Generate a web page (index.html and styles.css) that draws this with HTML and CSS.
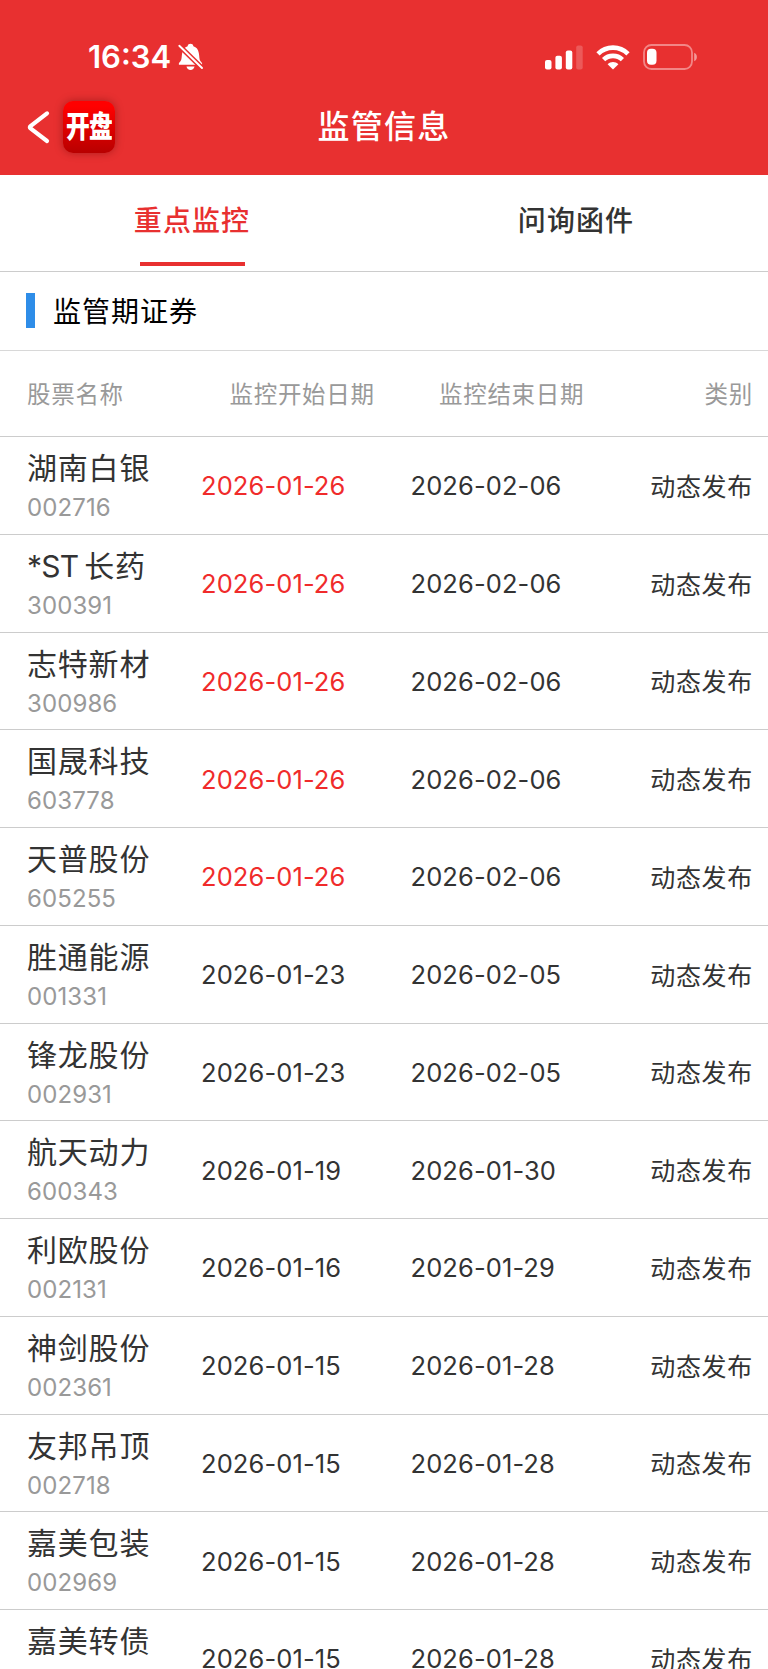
FILE: index.html
```html
<!DOCTYPE html>
<html lang="zh-CN">
  <head>
    <meta charset="UTF-8" />
    <meta name="viewport" content="width=device-width, initial-scale=1.0" />
    <title>监管信息</title>
    <link rel="stylesheet" href="styles.css">
  </head>
  <body>
    <header class="header">
      <div class="status_bar">
        <span class="clock">16:34</span>
        <svg class="bell" width="25" height="28" viewBox="0 0 25 28">
          <path fill="#fff" d="M1 21.7C.4 20.600 1.200 19.700 2.300 18.500C3.900 16.700 3.500 13.500 4.200 10C4.900 6.200 6.600 4.100 9.600 3.200C9.900 1.600 11 .8 12.500 .8S15.100 1.600 15.400 3.200C18.400 4.100 20.200 6.200 20.800 10C21.500 13.500 21.100 16.700 22.700 18.500C23.800 19.700 24.600 20.600 24 21.700Z"/>
          <path fill="#fff" d="M8.500 23.500H16.500C16 25.700 14.600 27 12.500 27S9 25.700 8.500 23.500Z"/>
          <path stroke="#e83030" stroke-width="5" d="M1 2.500L24.500 25.500"/>
          <path stroke="#fff" stroke-width="1.900" stroke-linecap="round" d="M1.300 2.800L24 25"/>
        </svg>
        <div class="status_icons">
          <svg width="38" height="25" viewBox="0 0 38 25" fill="#fff">
            <rect x="0" y="15" width="6.500" height="9.500" rx="2"/>
            <rect x="10.400" y="10.800" width="6.500" height="13.700" rx="2"/>
            <rect x="20.800" y="5.600" width="6.500" height="18.900" rx="2"/>
            <rect x="31.200" y="0.400" width="6.500" height="24.100" rx="2" opacity=".2"/>
          </svg>
          <svg class="wifi" width="34" height="25" viewBox="0 0 34 25" fill="none" stroke="#fff" stroke-width="4.600">
            <path d="M2 8.800C10.300 .5 23.700 .5 32 8.800"/>
            <path d="M7.600 14.700C12.800 9.600 21.200 9.600 26.400 14.700"/>
            <path fill="#fff" stroke="none" d="M17 24.500L11.600 19.200C14.600 16.300 19.400 16.300 22.400 19.200Z"/>
          </svg>
          <svg class="battery" width="55" height="26" viewBox="0 0 55 26">
            <rect x="1" y="1" width="48" height="24" rx="7.500" fill="none" stroke="#fff" stroke-width="1.800" opacity=".42"/>
            <rect x="4" y="4.800" width="9.500" height="16" rx="4" fill="#fff"/>
            <path d="M51.200 8.800C54.800 10.200 54.800 15.800 51.200 17.200Z" fill="#fff" opacity=".5"/>
          </svg>
        </div>
      </div>
      <div class="nav_bar">
        <div class="nav_left">
          <svg width="24" height="34" viewBox="0 0 24 34" fill="none" stroke="#fff" stroke-width="4.200" stroke-linecap="round" stroke-linejoin="round">
            <path d="M20 3.400L3.500 16.200Q2.200 17.300 3.500 18.400L20 31"/>
          </svg>
          <span class="logo"><span class="logo_text">开盘</span></span>
        </div>
        <h1 class="title">监管信息</h1>
      </div>
    </header>

    <nav class="tabs">
      <a class="tab active">重点监控</a>
      <a class="tab">问询函件</a>
    </nav>

    <h2 class="section_title">监管期证券</h2>

    <div class="list">
      <div class="row list_head">
        <span>股票名称</span><span>监控开始日期</span><span>监控结束日期</span><span class="type">类别</span>
      </div>
      <div class="row">
        <div class="stock"><span class="name">湖南白银</span><span class="code">002716</span></div>
        <span class="date red">2026-01-26</span><span class="date">2026-02-06</span><span class="type">动态发布</span>
      </div>
      <div class="row">
        <div class="stock"><span class="name"><span class="st">*ST</span>长药</span><span class="code">300391</span></div>
        <span class="date red">2026-01-26</span><span class="date">2026-02-06</span><span class="type">动态发布</span>
      </div>
      <div class="row">
        <div class="stock"><span class="name">志特新材</span><span class="code">300986</span></div>
        <span class="date red">2026-01-26</span><span class="date">2026-02-06</span><span class="type">动态发布</span>
      </div>
      <div class="row">
        <div class="stock"><span class="name">国晟科技</span><span class="code">603778</span></div>
        <span class="date red">2026-01-26</span><span class="date">2026-02-06</span><span class="type">动态发布</span>
      </div>
      <div class="row">
        <div class="stock"><span class="name">天普股份</span><span class="code">605255</span></div>
        <span class="date red">2026-01-26</span><span class="date">2026-02-06</span><span class="type">动态发布</span>
      </div>
      <div class="row">
        <div class="stock"><span class="name">胜通能源</span><span class="code">001331</span></div>
        <span class="date">2026-01-23</span><span class="date">2026-02-05</span><span class="type">动态发布</span>
      </div>
      <div class="row">
        <div class="stock"><span class="name">锋龙股份</span><span class="code">002931</span></div>
        <span class="date">2026-01-23</span><span class="date">2026-02-05</span><span class="type">动态发布</span>
      </div>
      <div class="row">
        <div class="stock"><span class="name">航天动力</span><span class="code">600343</span></div>
        <span class="date">2026-01-19</span><span class="date">2026-01-30</span><span class="type">动态发布</span>
      </div>
      <div class="row">
        <div class="stock"><span class="name">利欧股份</span><span class="code">002131</span></div>
        <span class="date">2026-01-16</span><span class="date">2026-01-29</span><span class="type">动态发布</span>
      </div>
      <div class="row">
        <div class="stock"><span class="name">神剑股份</span><span class="code">002361</span></div>
        <span class="date">2026-01-15</span><span class="date">2026-01-28</span><span class="type">动态发布</span>
      </div>
      <div class="row">
        <div class="stock"><span class="name">友邦吊顶</span><span class="code">002718</span></div>
        <span class="date">2026-01-15</span><span class="date">2026-01-28</span><span class="type">动态发布</span>
      </div>
      <div class="row">
        <div class="stock"><span class="name">嘉美包装</span><span class="code">002969</span></div>
        <span class="date">2026-01-15</span><span class="date">2026-01-28</span><span class="type">动态发布</span>
      </div>
      <div class="row">
        <div class="stock"><span class="name">嘉美转债</span></div>
        <span class="date">2026-01-15</span><span class="date">2026-01-28</span><span class="type">动态发布</span>
      </div>
    </div>
  </body>
</html>
```

FILE: styles.css
```css
* {
  box-sizing: border-box;
}

body {
  margin: 0;
  height: 1669px;
  overflow: hidden;
  background-color: #ffffff;
  color: #333333;
  font-family: "Inter", "Noto Sans CJK SC", sans-serif;
}

/* header */
.header {
  height: 175px;
  background-color: #e83030;
  color: #ffffff;
}

.status_bar {
  display: flex;
  align-items: center;
  height: 76px;
  padding: 38px 70px 0 88px;
}

.clock {
  width: 83px;
  font-size: 31px;
  font-weight: 600;
  line-height: 38px;
  white-space: nowrap;
}

.bell {
  margin-left: 7px;
}

.status_icons {
  display: flex;
  align-items: center;
  margin-left: auto;
}

.wifi {
  margin-left: 13px;
}

.battery {
  margin-left: 13px;
}

.nav_bar {
  display: grid;
  grid-template-columns: 1fr auto 1fr;
  align-items: center;
  height: 99px;
}

.nav_left {
  display: flex;
  align-items: center;
  padding-left: 27px;
  margin-top: 2px;
}

.logo {
  display: flex;
  align-items: center;
  justify-content: center;
  width: 52px;
  height: 52px;
  margin-left: 12px;
  border-radius: 10px;
  background: linear-gradient(#ff0000 10%, #b80000);
  box-shadow: 0 0 8px rgba(80, 0, 0, 0.4);
}

.logo_text {
  font-size: 27px;
  font-weight: 900;
  line-height: 52px;
  letter-spacing: -1px;
  transform: scale(0.88, 1.1);
}

.title {
  margin: 2px 0 0;
  font-size: 32px;
  font-weight: 500;
  letter-spacing: 1.2px;
  line-height: 48px;
}

/* tabs */
.tabs {
  display: flex;
  height: 97px;
  border-bottom: 1px solid #cccccc;
}

.tab {
  display: flex;
  flex: 1;
  flex-direction: column;
  align-items: center;
  justify-content: space-between;
  padding: 26px 0 5px;
  font-size: 28px;
  font-weight: 500;
  letter-spacing: 1.1px;
  line-height: 40px;
}

.active {
  color: #e83030;
}

.active::after {
  content: "";
  width: 105px;
  height: 4px;
  background-color: #e83030;
}

.section_title {
  display: flex;
  align-items: center;
  height: 79px;
  margin: 0;
  padding: 0 0 2px 26px;
  border-bottom: 1px solid #d8d8d8;
  color: #000000;
  font-size: 28px;
  font-weight: 400;
  letter-spacing: 1px;
}

.section_title::before {
  content: "";
  width: 9px;
  height: 35px;
  margin-right: 18px;
  background-color: #2e8de8;
}

/* list */
.row {
  display: grid;
  grid-template-columns: 174px 209.5px 1fr auto;
  align-items: center;
  height: 97.75px;
  padding: 0 15px 0 27px;
  border-bottom: 1px solid #cccccc;
  white-space: nowrap;
}

.list_head {
  grid-template-columns: 202.5px 209.5px 1fr auto;
  height: 86px;
  padding-bottom: 2px;
  color: #999999;
  font-size: 23.5px;
  letter-spacing: 0.7px;
}

.stock {
  display: flex;
  flex-direction: column;
  align-self: start;
  padding-top: 11px;
}

.name {
  font-size: 30px;
  letter-spacing: 0.8px;
  line-height: 40px;
}

.st {
  margin-right: 6px;
  letter-spacing: -0.8px;
}

.code {
  color: #999999;
  font-size: 24px;
  letter-spacing: 0.1px;
  line-height: 40px;
}

.date {
  padding-top: 1px;
  font-size: 25.5px;
  letter-spacing: 0.1px;
}

.red {
  color: #f02b2b;
}

.type {
  padding-bottom: 1px;
  font-size: 25px;
  letter-spacing: 0.7px;
  text-align: right;
}

.list_head .type {
  padding-bottom: 0;
  font-size: 23.5px;
}
```
